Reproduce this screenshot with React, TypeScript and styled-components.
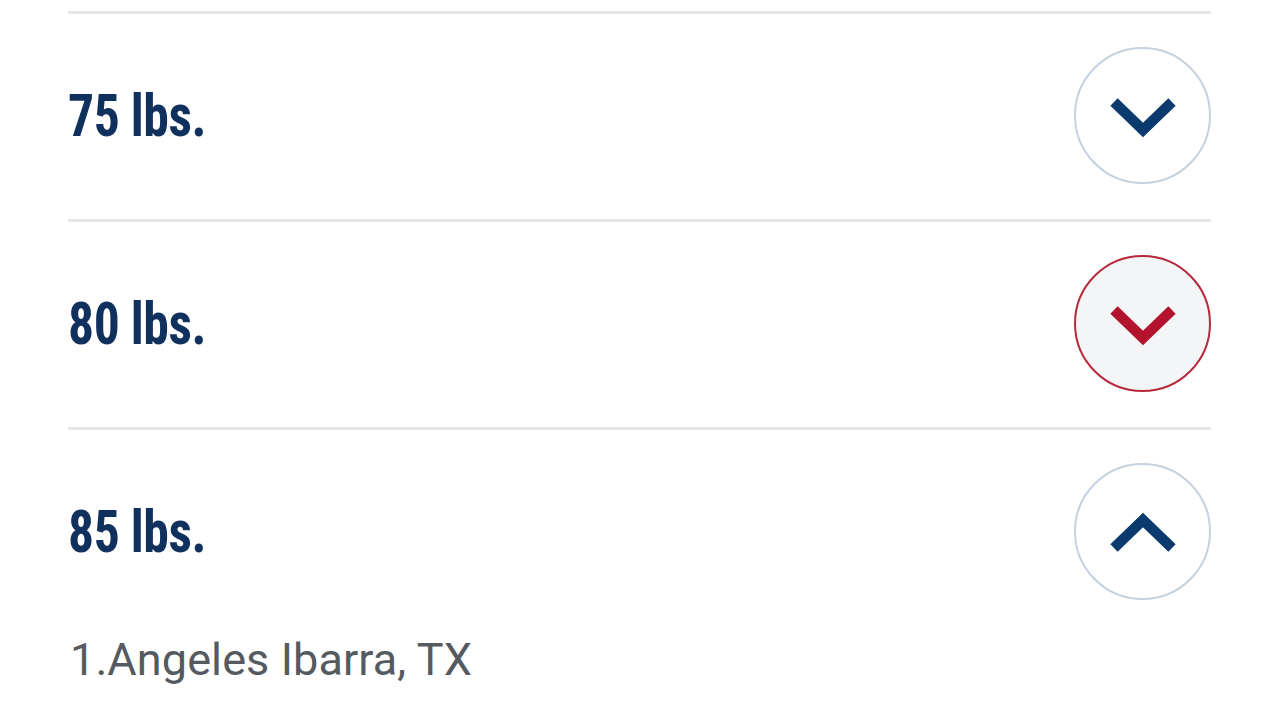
import styled, { createGlobalStyle } from "styled-components";

const GlobalStyle = createGlobalStyle`
  html, body {
    margin: 0;
    padding: 0;
    background: #ffffff;
  }
`;

type Weight = {
  label: string;
  state: "closed" | "active" | "open";
  entries?: string[];
};

const weights: Weight[] = [
  { label: "75 lbs.", state: "closed" },
  { label: "80 lbs.", state: "active" },
  { label: "85 lbs.", state: "open", entries: ["1.Angeles Ibarra, TX"] },
];

const Chevron = ({ up, color }: { up?: boolean; color: string }) => (
  <svg width="68" height="44" viewBox="0 0 68 44">
    <path
      d={up ? "M5 38 L34 10 L63 38" : "M5 8 L34 36 L63 8"}
      fill="none"
      stroke={color}
      strokeWidth="10.5"
      strokeLinejoin="miter"
    />
  </svg>
);

export default function App() {
  return (
    <>
      <GlobalStyle />
      <Page>
        {weights.map((w) => (
          <Section key={w.label}>
            <Header>
              <Title>{w.label}</Title>
              <Toggle $active={w.state === "active"}>
                <Chevron
                  up={w.state === "open"}
                  color={w.state === "active" ? "#b3132c" : "#0b3a6e"}
                />
              </Toggle>
            </Header>
            {w.entries && (
              <Entries>
                {w.entries.map((e) => (
                  <Entry key={e}>{e}</Entry>
                ))}
              </Entries>
            )}
          </Section>
        ))}
      </Page>
    </>
  );
}

const Page = styled.div`
  padding: 11px 69px 0 68px;
  display: flex;
  flex-direction: column;
`;

const Section = styled.section`
  border-top: 3px solid #e6e6e6;
`;

const Header = styled.div`
  display: flex;
  align-items: center;
  justify-content: space-between;
  padding: 33px 0 35px;
`;

const Title = styled.h2`
  margin: 0;
  font-family: "Roboto Condensed", "Liberation Sans Narrow", "Liberation Sans", sans-serif;
  font-weight: 700;
  font-size: 60px;
  letter-spacing: -0.5px;
  color: #10305e;
  transform: scaleX(0.86);
  transform-origin: left center;
`;

const Toggle = styled.button<{ $active: boolean }>`
  width: 137px;
  height: 137px;
  border-radius: 50%;
  box-sizing: border-box;
  border: 2px solid ${(p) => (p.$active ? "#b7283a" : "#c6d1de")};
  background: ${(p) => (p.$active ? "#f4f5f7" : "#ffffff")};
  display: flex;
  align-items: center;
  justify-content: center;
  padding: 0;
`;

const Entries = styled.div`
  display: flex;
  flex-direction: column;
  padding: 0 2px;
  margin-top: -1px;
`;

const Entry = styled.div`
  font-family: Roboto, "Liberation Sans", sans-serif;
  font-size: 45px;
  letter-spacing: 0.1px;
  color: #555a61;
  line-height: 52px;
`;
